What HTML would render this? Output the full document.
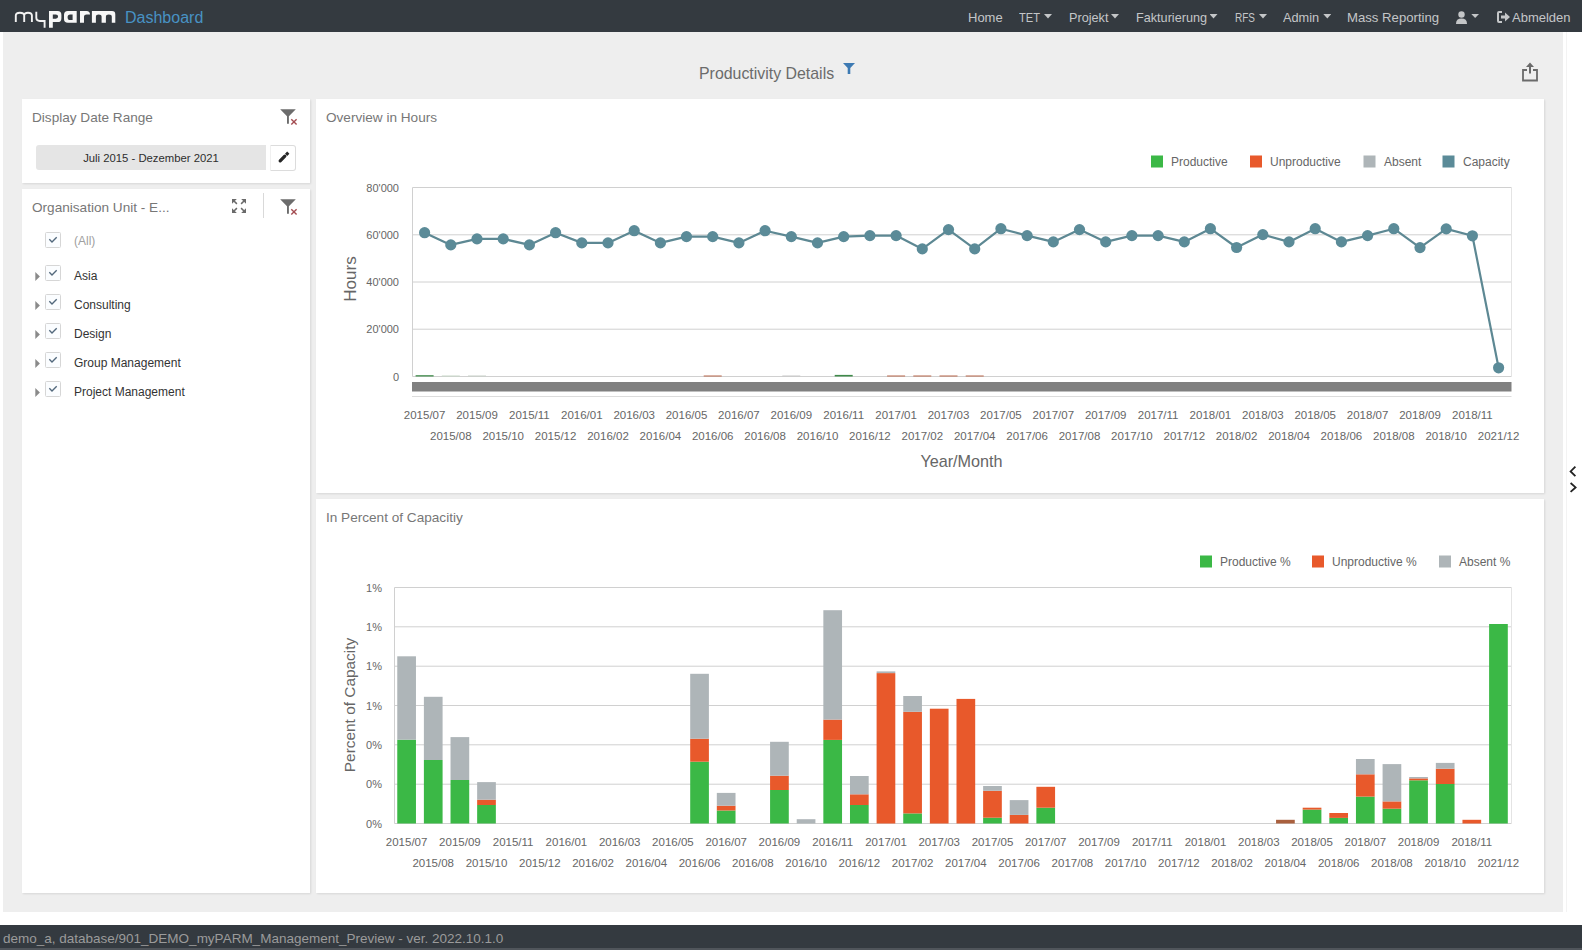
<!DOCTYPE html>
<html><head><meta charset="utf-8"><title>myPARM Dashboard</title>
<style>
html,body{margin:0;padding:0;}
body{width:1582px;height:950px;overflow:hidden;position:relative;background:#fff;font-family:"Liberation Sans", sans-serif;}
.abs{position:absolute;}
#nav{position:absolute;left:0;top:0;width:1582px;height:32px;background:#343a40;}
.nv{position:absolute;top:10px;font-size:13px;color:#c4c6c8;white-space:nowrap;line-height:16px;}
.caret{position:absolute;top:14px;width:8px;height:4.5px;background:#c4c6c8;clip-path:polygon(0 0,100% 0,50% 100%);}
#content{position:absolute;left:3px;top:32px;width:1560px;height:880px;background:#eeeeee;}
.card{position:absolute;background:#fff;box-shadow:1px 1px 2px rgba(0,0,0,0.10);}
.ttl{position:absolute;font-size:13.6px;color:#777;white-space:nowrap;line-height:16px;}
.cb{position:absolute;width:14px;height:14px;border:1px solid #dcdcdc;background:#fbfdff;}
.cb::after{content:"";position:absolute;left:4.5px;top:1.5px;width:3.5px;height:7px;border-right:1.6px solid #4f6c87;border-bottom:1.6px solid #4f6c87;transform:rotate(45deg);}
.tx{position:absolute;font-size:12px;color:#333;white-space:nowrap;line-height:14px;}
.arr{position:absolute;width:0;height:0;border-top:4px solid transparent;border-bottom:4px solid transparent;border-left:5px solid #8a8a8a;}
#footer{position:absolute;left:0;top:925px;width:1582px;height:25px;background:#343a40;}
svg text{font-family:"Liberation Sans", sans-serif;}
</style></head><body>
<div id="nav">
  <svg class="abs" style="left:0;top:0" width="125" height="32" viewBox="0 0 125 32">
    <path d="M15.8 22 V15.6 Q15.8 12.7 19.9 12.7 Q24.2 12.7 24.2 15.6 V22 M24.2 15.6 Q24.2 12.7 28 12.7 Q31.9 12.7 31.9 15.6 V22" fill="none" stroke="#f2f2f2" stroke-width="1.9"/>
    <path d="M36.3 11.8 V17.6 Q36.3 21 39.8 21 H44.6 V27.7" fill="none" stroke="#f2f2f2" stroke-width="1.9"/>
    <path fill="#f7f7f7" fill-rule="evenodd" d="M49 11.1 H57.6 Q61.4 11.1 61.4 14.9 V18.2 Q61.4 22.1 57.6 22.1 H52.8 V27.7 H49 Z M52.8 14.4 V18.7 H55.8 Q58.1 18.7 58.1 16.55 Q58.1 14.4 55.8 14.4 Z"/>
    <path fill="#f7f7f7" fill-rule="evenodd" d="M76.7 11 V22.8 H67.9 Q64 22.8 64 19 V14.8 Q64 11 67.9 11 Z M72.6 14.4 H70.2 Q67.6 14.4 67.6 17.25 Q67.6 20.1 70.2 20.1 H72.6 Z"/>
    <path fill="#f7f7f7" d="M80 22.8 V11 H86.5 Q90 11 90 14.6 H86.5 Q84 14.6 84 16.5 V22.8 Z"/>
    <path fill="#f7f7f7" d="M91.9 22.8 V11.1 H112 Q115.3 11.1 115.3 14.4 V22.8 H111.8 V16.8 Q111.8 14.4 108.85 14.4 Q105.9 14.4 105.9 16.8 V22.8 H101.6 V16.8 Q101.6 14.4 98.75 14.4 Q95.9 14.4 95.9 16.8 V22.8 Z"/>
  </svg>
  <div class="abs" style="left:125px;top:8px;font-size:16px;color:#4892c4;line-height:19px;">Dashboard</div>
  <div class="nv" style="left:968px">Home</div>
  <div class="nv" style="left:1019px;transform:scaleX(0.854);transform-origin:0 0">TET</div><div class="caret" style="left:1044px"></div>
  <div class="nv" style="left:1068.5px;transform:scaleX(0.975);transform-origin:0 0">Projekt</div><div class="caret" style="left:1111px"></div>
  <div class="nv" style="left:1135.5px;transform:scaleX(0.973);transform-origin:0 0">Fakturierung</div><div class="caret" style="left:1209.5px"></div>
  <div class="nv" style="left:1234.5px;transform:scaleX(0.77);transform-origin:0 0">RFS</div><div class="caret" style="left:1259px"></div>
  <div class="nv" style="left:1283px;transform:scaleX(0.981);transform-origin:0 0">Admin</div><div class="caret" style="left:1323.3px"></div>
  <div class="nv" style="left:1347.3px;transform:scaleX(1.012);transform-origin:0 0">Mass Reporting</div>
  <svg class="abs" style="left:1455px;top:10px" width="26" height="16" viewBox="0 0 26 16"><circle cx="6.5" cy="4.5" r="3.2" fill="#c4c6c8"/><path d="M1 14 Q1 8.6 6.5 8.6 Q12 8.6 12 14 Z" fill="#c4c6c8"/><path d="M16.3 4 L24 4 L20.15 8 Z" fill="#c4c6c8"/></svg>
  <svg class="abs" style="left:1497px;top:11px" width="14" height="12" viewBox="0 0 14 12"><path d="M5 1 H2 Q1 1 1 2 V10 Q1 11 2 11 H5" fill="none" stroke="#c4c6c8" stroke-width="2"/><path d="M4 4.5 H8 V1.5 L13 6 L8 10.5 V7.5 H4 Z" fill="#c4c6c8"/></svg>
  <div class="nv" style="left:1512px">Abmelden</div>
</div>
<div id="content"></div>
<div class="abs" style="left:1566px;top:32px;width:1px;height:880px;background:#f3f3f3"></div>
<div class="abs" style="left:699px;top:65px;font-size:15.9px;color:#6b6b6b;line-height:18px;white-space:nowrap">Productivity Details</div>
<svg class="abs" style="left:843px;top:63px" width="12" height="11" viewBox="0 0 12 11"><path d="M0 0 H12 L7.3 5 V11 H4.7 V5 Z" fill="#3d7ab3"/></svg>
<svg class="abs" style="left:1520px;top:61px" width="20" height="22" viewBox="0 0 20 22"><path d="M7 9 H3 V19.5 H17 V9 H13" fill="none" stroke="#6a6a6a" stroke-width="1.8"/><path d="M10 1.5 L14 6 H11 V12.5 H9 V6 H6 Z" fill="#6a6a6a"/></svg>

<div class="card" style="left:22px;top:99px;width:288px;height:84px"></div>
<div class="ttl" style="left:32px;top:110px">Display Date Range</div>
<div class="abs" style="left:280px;top:109px"><svg width="18" height="17" viewBox="0 0 18 17"><path d="M0.2 0.3 H15.8 L8.9 7.3 V14.7 H7 V7.3 Z" fill="#6c6c6c"/><path d="M11.3 10.2 L16.6 15.5 M16.6 10.2 L11.3 15.5" stroke="#a44d52" stroke-width="1.4"/></svg></div>
<div class="abs" style="left:36px;top:145px;width:230px;height:25px;background:#e5e5e5;border-radius:3px 0 0 3px;"></div>
<div class="abs" style="left:36px;top:151px;width:230px;text-align:center;font-size:11.3px;color:#2e2e2e;line-height:14px">Juli 2015 - Dezember 2021</div>
<div class="abs" style="left:270px;top:145px;width:23.5px;height:24px;border:1px solid #dcdcdc;border-left-color:#f0f0f0;border-radius:0 3px 3px 0;background:#fff"></div>
<svg class="abs" style="left:270px;top:145px" width="26" height="26" viewBox="0 0 26 26"><path d="M10.2 15.8 L14.8 11.2" stroke="#262626" stroke-width="3.3" stroke-linecap="round"/><path d="M17.2 6.6 L19.4 8.8 L17.2 11 L15 8.8 Z" fill="#262626"/></svg>

<div class="card" style="left:22px;top:189px;width:288px;height:704px"></div>
<div class="ttl" style="left:32px;top:200px">Organisation Unit - E...</div>
<svg class="abs" style="left:231px;top:198px" width="16" height="16" viewBox="0 0 16 16" fill="#6a6a6a">
<g stroke="none"><path d="M1 1 H5.8 L1 5.8 Z"/><path d="M15 1 H10.2 L15 5.8 Z"/><path d="M1 15 H5.8 L1 10.2 Z"/><path d="M15 15 H10.2 L15 10.2 Z"/></g>
<g stroke="#6a6a6a" stroke-width="1.5"><path d="M3 3 L5.9 5.9 M13 3 L10.1 5.9 M3 13 L5.9 10.1 M13 13 L10.1 10.1"/></g></svg>
<div class="abs" style="left:263px;top:193px;width:1px;height:25px;background:#d9d9d9"></div>
<div class="abs" style="left:280px;top:199px"><svg width="18" height="17" viewBox="0 0 18 17"><path d="M0.2 0.3 H15.8 L8.9 7.3 V14.7 H7 V7.3 Z" fill="#6c6c6c"/><path d="M11.3 10.2 L16.6 15.5 M16.6 10.2 L11.3 15.5" stroke="#a44d52" stroke-width="1.4"/></svg></div>
<svg class="abs" style="left:45px;top:232px" width="16" height="16" viewBox="0 0 16 16"><rect x="0.5" y="0.5" width="15" height="15" rx="1" fill="#fbfdff" stroke="#d6d6d6"/><path d="M4.3 7.3 L7 10 L11.7 5.2" fill="none" stroke="#52687c" stroke-width="1.35"/></svg><div class="tx" style="left:74px;top:234px;color:#a0a0a0">(All)</div>
<svg class="abs" style="left:35px;top:272px" width="6" height="9" viewBox="0 0 6 9"><path d="M0.3 0 L4.9 4.5 L0.3 9 Z" fill="#8a8a8a"/></svg><svg class="abs" style="left:45px;top:265px" width="16" height="16" viewBox="0 0 16 16"><rect x="0.5" y="0.5" width="15" height="15" rx="1" fill="#fbfdff" stroke="#d6d6d6"/><path d="M4.3 7.3 L7 10 L11.7 5.2" fill="none" stroke="#52687c" stroke-width="1.35"/></svg><div class="tx" style="left:74px;top:269px">Asia</div>
<svg class="abs" style="left:35px;top:301px" width="6" height="9" viewBox="0 0 6 9"><path d="M0.3 0 L4.9 4.5 L0.3 9 Z" fill="#8a8a8a"/></svg><svg class="abs" style="left:45px;top:294px" width="16" height="16" viewBox="0 0 16 16"><rect x="0.5" y="0.5" width="15" height="15" rx="1" fill="#fbfdff" stroke="#d6d6d6"/><path d="M4.3 7.3 L7 10 L11.7 5.2" fill="none" stroke="#52687c" stroke-width="1.35"/></svg><div class="tx" style="left:74px;top:298px">Consulting</div>
<svg class="abs" style="left:35px;top:330px" width="6" height="9" viewBox="0 0 6 9"><path d="M0.3 0 L4.9 4.5 L0.3 9 Z" fill="#8a8a8a"/></svg><svg class="abs" style="left:45px;top:323px" width="16" height="16" viewBox="0 0 16 16"><rect x="0.5" y="0.5" width="15" height="15" rx="1" fill="#fbfdff" stroke="#d6d6d6"/><path d="M4.3 7.3 L7 10 L11.7 5.2" fill="none" stroke="#52687c" stroke-width="1.35"/></svg><div class="tx" style="left:74px;top:327px">Design</div>
<svg class="abs" style="left:35px;top:359px" width="6" height="9" viewBox="0 0 6 9"><path d="M0.3 0 L4.9 4.5 L0.3 9 Z" fill="#8a8a8a"/></svg><svg class="abs" style="left:45px;top:352px" width="16" height="16" viewBox="0 0 16 16"><rect x="0.5" y="0.5" width="15" height="15" rx="1" fill="#fbfdff" stroke="#d6d6d6"/><path d="M4.3 7.3 L7 10 L11.7 5.2" fill="none" stroke="#52687c" stroke-width="1.35"/></svg><div class="tx" style="left:74px;top:356px">Group Management</div>
<svg class="abs" style="left:35px;top:388px" width="6" height="9" viewBox="0 0 6 9"><path d="M0.3 0 L4.9 4.5 L0.3 9 Z" fill="#8a8a8a"/></svg><svg class="abs" style="left:45px;top:381px" width="16" height="16" viewBox="0 0 16 16"><rect x="0.5" y="0.5" width="15" height="15" rx="1" fill="#fbfdff" stroke="#d6d6d6"/><path d="M4.3 7.3 L7 10 L11.7 5.2" fill="none" stroke="#52687c" stroke-width="1.35"/></svg><div class="tx" style="left:74px;top:385px">Project Management</div>

<div class="card" style="left:316px;top:99px;width:1228px;height:394px"></div>
<div class="ttl" style="left:326px;top:110px">Overview in Hours</div>
<div class="card" style="left:316px;top:499px;width:1228px;height:394px"></div>
<div class="ttl" style="left:326px;top:510px">In Percent of Capacitiy</div>

<svg class="abs" style="left:0;top:0" width="1582" height="950" viewBox="0 0 1582 950">
<line x1="412.5" y1="187.5" x2="1511.5" y2="187.5" stroke="#d0d0d0" stroke-width="1"/>
<line x1="412.5" y1="234.8" x2="1511.5" y2="234.8" stroke="#d0d0d0" stroke-width="1"/>
<line x1="412.5" y1="282.0" x2="1511.5" y2="282.0" stroke="#d0d0d0" stroke-width="1"/>
<line x1="412.5" y1="329.2" x2="1511.5" y2="329.2" stroke="#d0d0d0" stroke-width="1"/>
<line x1="412.5" y1="376.5" x2="1511.5" y2="376.5" stroke="#d0d0d0" stroke-width="1"/>
<line x1="412.5" y1="187.5" x2="412.5" y2="376.5" stroke="#d0d0d0" stroke-width="1"/>
<line x1="1511.5" y1="187.5" x2="1511.5" y2="376.5" stroke="#e4e4e4" stroke-width="1"/>
<text x="399" y="191.5" text-anchor="end" font-size="11" fill="#666">80'000</text>
<text x="399" y="238.8" text-anchor="end" font-size="11" fill="#666">60'000</text>
<text x="399" y="286.0" text-anchor="end" font-size="11" fill="#666">40'000</text>
<text x="399" y="333.2" text-anchor="end" font-size="11" fill="#666">20'000</text>
<text x="399" y="380.5" text-anchor="end" font-size="11" fill="#666">0</text>
<rect x="415.6" y="375.2" width="18" height="1.3" fill="#3f8a4a"/>
<rect x="441.8" y="375.5" width="18" height="1" fill="#c8d8c8"/>
<rect x="468.0" y="375.5" width="18" height="1" fill="#c8d0c8"/>
<rect x="703.7" y="375.5" width="18" height="1" fill="#b8664a"/>
<rect x="782.3" y="375.5" width="18" height="1" fill="#c8c8c8"/>
<rect x="834.7" y="374.9" width="18" height="1.6" fill="#3f8a4a"/>
<rect x="887.1" y="375.5" width="18" height="1" fill="#b8664a"/>
<rect x="913.3" y="375.5" width="18" height="1" fill="#b8664a"/>
<rect x="939.5" y="375.5" width="18" height="1" fill="#b8664a"/>
<rect x="965.7" y="375.5" width="18" height="1" fill="#b8664a"/>
<rect x="412" y="382" width="1099.5" height="9.5" fill="#808080"/>
<line x1="412" y1="396.5" x2="1511.5" y2="396.5" stroke="#dcdcdc" stroke-width="1"/>
<polyline points="424.6,232.7 450.8,244.9 477.0,238.9 503.2,238.9 529.4,244.9 555.6,232.7 581.8,242.9 608.0,242.9 634.2,230.7 660.4,242.9 686.5,236.6 712.7,236.6 738.9,242.9 765.1,230.7 791.3,236.6 817.5,242.9 843.7,236.6 869.9,235.6 896.1,235.6 922.3,248.9 948.5,229.6 974.7,248.9 1000.9,228.7 1027.1,235.6 1053.3,241.9 1079.5,229.6 1105.7,241.9 1131.9,235.6 1158.1,235.6 1184.3,241.9 1210.4,228.7 1236.6,247.5 1262.8,234.6 1289.0,241.9 1315.2,228.7 1341.4,241.9 1367.6,235.6 1393.8,228.7 1420.0,247.6 1446.2,228.9 1472.4,235.8 1498.6,367.8" fill="none" stroke="#5d8893" stroke-width="2.2" stroke-linejoin="round"/>
<circle cx="424.6" cy="232.7" r="5.6" fill="#5b8b98"/>
<circle cx="450.8" cy="244.9" r="5.6" fill="#5b8b98"/>
<circle cx="477.0" cy="238.9" r="5.6" fill="#5b8b98"/>
<circle cx="503.2" cy="238.9" r="5.6" fill="#5b8b98"/>
<circle cx="529.4" cy="244.9" r="5.6" fill="#5b8b98"/>
<circle cx="555.6" cy="232.7" r="5.6" fill="#5b8b98"/>
<circle cx="581.8" cy="242.9" r="5.6" fill="#5b8b98"/>
<circle cx="608.0" cy="242.9" r="5.6" fill="#5b8b98"/>
<circle cx="634.2" cy="230.7" r="5.6" fill="#5b8b98"/>
<circle cx="660.4" cy="242.9" r="5.6" fill="#5b8b98"/>
<circle cx="686.5" cy="236.6" r="5.6" fill="#5b8b98"/>
<circle cx="712.7" cy="236.6" r="5.6" fill="#5b8b98"/>
<circle cx="738.9" cy="242.9" r="5.6" fill="#5b8b98"/>
<circle cx="765.1" cy="230.7" r="5.6" fill="#5b8b98"/>
<circle cx="791.3" cy="236.6" r="5.6" fill="#5b8b98"/>
<circle cx="817.5" cy="242.9" r="5.6" fill="#5b8b98"/>
<circle cx="843.7" cy="236.6" r="5.6" fill="#5b8b98"/>
<circle cx="869.9" cy="235.6" r="5.6" fill="#5b8b98"/>
<circle cx="896.1" cy="235.6" r="5.6" fill="#5b8b98"/>
<circle cx="922.3" cy="248.9" r="5.6" fill="#5b8b98"/>
<circle cx="948.5" cy="229.6" r="5.6" fill="#5b8b98"/>
<circle cx="974.7" cy="248.9" r="5.6" fill="#5b8b98"/>
<circle cx="1000.9" cy="228.7" r="5.6" fill="#5b8b98"/>
<circle cx="1027.1" cy="235.6" r="5.6" fill="#5b8b98"/>
<circle cx="1053.3" cy="241.9" r="5.6" fill="#5b8b98"/>
<circle cx="1079.5" cy="229.6" r="5.6" fill="#5b8b98"/>
<circle cx="1105.7" cy="241.9" r="5.6" fill="#5b8b98"/>
<circle cx="1131.9" cy="235.6" r="5.6" fill="#5b8b98"/>
<circle cx="1158.1" cy="235.6" r="5.6" fill="#5b8b98"/>
<circle cx="1184.3" cy="241.9" r="5.6" fill="#5b8b98"/>
<circle cx="1210.4" cy="228.7" r="5.6" fill="#5b8b98"/>
<circle cx="1236.6" cy="247.5" r="5.6" fill="#5b8b98"/>
<circle cx="1262.8" cy="234.6" r="5.6" fill="#5b8b98"/>
<circle cx="1289.0" cy="241.9" r="5.6" fill="#5b8b98"/>
<circle cx="1315.2" cy="228.7" r="5.6" fill="#5b8b98"/>
<circle cx="1341.4" cy="241.9" r="5.6" fill="#5b8b98"/>
<circle cx="1367.6" cy="235.6" r="5.6" fill="#5b8b98"/>
<circle cx="1393.8" cy="228.7" r="5.6" fill="#5b8b98"/>
<circle cx="1420.0" cy="247.6" r="5.6" fill="#5b8b98"/>
<circle cx="1446.2" cy="228.9" r="5.6" fill="#5b8b98"/>
<circle cx="1472.4" cy="235.8" r="5.6" fill="#5b8b98"/>
<circle cx="1498.6" cy="367.8" r="5.6" fill="#5b8b98"/>
<text x="424.6" y="419" text-anchor="middle" font-size="11.5" fill="#666">2015/07</text>
<text x="450.8" y="440.2" text-anchor="middle" font-size="11.5" fill="#666">2015/08</text>
<text x="477.0" y="419" text-anchor="middle" font-size="11.5" fill="#666">2015/09</text>
<text x="503.2" y="440.2" text-anchor="middle" font-size="11.5" fill="#666">2015/10</text>
<text x="529.4" y="419" text-anchor="middle" font-size="11.5" fill="#666">2015/11</text>
<text x="555.6" y="440.2" text-anchor="middle" font-size="11.5" fill="#666">2015/12</text>
<text x="581.8" y="419" text-anchor="middle" font-size="11.5" fill="#666">2016/01</text>
<text x="608.0" y="440.2" text-anchor="middle" font-size="11.5" fill="#666">2016/02</text>
<text x="634.2" y="419" text-anchor="middle" font-size="11.5" fill="#666">2016/03</text>
<text x="660.4" y="440.2" text-anchor="middle" font-size="11.5" fill="#666">2016/04</text>
<text x="686.5" y="419" text-anchor="middle" font-size="11.5" fill="#666">2016/05</text>
<text x="712.7" y="440.2" text-anchor="middle" font-size="11.5" fill="#666">2016/06</text>
<text x="738.9" y="419" text-anchor="middle" font-size="11.5" fill="#666">2016/07</text>
<text x="765.1" y="440.2" text-anchor="middle" font-size="11.5" fill="#666">2016/08</text>
<text x="791.3" y="419" text-anchor="middle" font-size="11.5" fill="#666">2016/09</text>
<text x="817.5" y="440.2" text-anchor="middle" font-size="11.5" fill="#666">2016/10</text>
<text x="843.7" y="419" text-anchor="middle" font-size="11.5" fill="#666">2016/11</text>
<text x="869.9" y="440.2" text-anchor="middle" font-size="11.5" fill="#666">2016/12</text>
<text x="896.1" y="419" text-anchor="middle" font-size="11.5" fill="#666">2017/01</text>
<text x="922.3" y="440.2" text-anchor="middle" font-size="11.5" fill="#666">2017/02</text>
<text x="948.5" y="419" text-anchor="middle" font-size="11.5" fill="#666">2017/03</text>
<text x="974.7" y="440.2" text-anchor="middle" font-size="11.5" fill="#666">2017/04</text>
<text x="1000.9" y="419" text-anchor="middle" font-size="11.5" fill="#666">2017/05</text>
<text x="1027.1" y="440.2" text-anchor="middle" font-size="11.5" fill="#666">2017/06</text>
<text x="1053.3" y="419" text-anchor="middle" font-size="11.5" fill="#666">2017/07</text>
<text x="1079.5" y="440.2" text-anchor="middle" font-size="11.5" fill="#666">2017/08</text>
<text x="1105.7" y="419" text-anchor="middle" font-size="11.5" fill="#666">2017/09</text>
<text x="1131.9" y="440.2" text-anchor="middle" font-size="11.5" fill="#666">2017/10</text>
<text x="1158.1" y="419" text-anchor="middle" font-size="11.5" fill="#666">2017/11</text>
<text x="1184.3" y="440.2" text-anchor="middle" font-size="11.5" fill="#666">2017/12</text>
<text x="1210.4" y="419" text-anchor="middle" font-size="11.5" fill="#666">2018/01</text>
<text x="1236.6" y="440.2" text-anchor="middle" font-size="11.5" fill="#666">2018/02</text>
<text x="1262.8" y="419" text-anchor="middle" font-size="11.5" fill="#666">2018/03</text>
<text x="1289.0" y="440.2" text-anchor="middle" font-size="11.5" fill="#666">2018/04</text>
<text x="1315.2" y="419" text-anchor="middle" font-size="11.5" fill="#666">2018/05</text>
<text x="1341.4" y="440.2" text-anchor="middle" font-size="11.5" fill="#666">2018/06</text>
<text x="1367.6" y="419" text-anchor="middle" font-size="11.5" fill="#666">2018/07</text>
<text x="1393.8" y="440.2" text-anchor="middle" font-size="11.5" fill="#666">2018/08</text>
<text x="1420.0" y="419" text-anchor="middle" font-size="11.5" fill="#666">2018/09</text>
<text x="1446.2" y="440.2" text-anchor="middle" font-size="11.5" fill="#666">2018/10</text>
<text x="1472.4" y="419" text-anchor="middle" font-size="11.5" fill="#666">2018/11</text>
<text x="1498.6" y="440.2" text-anchor="middle" font-size="11.5" fill="#666">2021/12</text>
<text x="961.5" y="467" text-anchor="middle" font-size="16.2" fill="#666">Year/Month</text>
<text transform="translate(355.8,279) rotate(-90)" text-anchor="middle" font-size="17" fill="#666">Hours</text>
<rect x="1151" y="155.5" width="12" height="12" fill="#3bb846"/>
<text x="1171" y="166" font-size="12" fill="#666">Productive</text>
<rect x="1250" y="155.5" width="12" height="12" fill="#e8592b"/>
<text x="1270" y="166" font-size="12" fill="#666">Unproductive</text>
<rect x="1363.5" y="155.5" width="12" height="12" fill="#aeb5b8"/>
<text x="1384" y="166" font-size="12" fill="#666">Absent</text>
<rect x="1442.5" y="155.5" width="12" height="12" fill="#5b8b98"/>
<text x="1463" y="166" font-size="12" fill="#666">Capacity</text>
<line x1="394.5" y1="587.5" x2="1511.5" y2="587.5" stroke="#d0d0d0" stroke-width="1"/>
<line x1="394.5" y1="626.8" x2="1511.5" y2="626.8" stroke="#d0d0d0" stroke-width="1"/>
<line x1="394.5" y1="666.2" x2="1511.5" y2="666.2" stroke="#d0d0d0" stroke-width="1"/>
<line x1="394.5" y1="705.5" x2="1511.5" y2="705.5" stroke="#d0d0d0" stroke-width="1"/>
<line x1="394.5" y1="744.8" x2="1511.5" y2="744.8" stroke="#d0d0d0" stroke-width="1"/>
<line x1="394.5" y1="784.2" x2="1511.5" y2="784.2" stroke="#d0d0d0" stroke-width="1"/>
<line x1="394.5" y1="823.5" x2="1511.5" y2="823.5" stroke="#d0d0d0" stroke-width="1"/>
<line x1="394.5" y1="587.5" x2="394.5" y2="823.5" stroke="#d0d0d0" stroke-width="1"/>
<line x1="1511.5" y1="587.5" x2="1511.5" y2="823.5" stroke="#e4e4e4" stroke-width="1"/>
<text x="382" y="591.5" text-anchor="end" font-size="11" fill="#666">1%</text>
<text x="382" y="630.8" text-anchor="end" font-size="11" fill="#666">1%</text>
<text x="382" y="670.2" text-anchor="end" font-size="11" fill="#666">1%</text>
<text x="382" y="709.5" text-anchor="end" font-size="11" fill="#666">1%</text>
<text x="382" y="748.8" text-anchor="end" font-size="11" fill="#666">0%</text>
<text x="382" y="788.2" text-anchor="end" font-size="11" fill="#666">0%</text>
<text x="382" y="827.5" text-anchor="end" font-size="11" fill="#666">0%</text>
<rect x="397.26" y="739.7" width="18.7" height="83.80" fill="#3bb846"/>
<rect x="397.26" y="656.3" width="18.7" height="83.40" fill="#aeb5b8"/>
<rect x="423.89" y="760" width="18.7" height="63.50" fill="#3bb846"/>
<rect x="423.89" y="696.8" width="18.7" height="63.20" fill="#aeb5b8"/>
<rect x="450.52" y="780" width="18.7" height="43.50" fill="#3bb846"/>
<rect x="450.52" y="737.1" width="18.7" height="42.90" fill="#aeb5b8"/>
<rect x="477.15" y="805" width="18.7" height="18.50" fill="#3bb846"/>
<rect x="477.15" y="799.7" width="18.7" height="5.30" fill="#e8592b"/>
<rect x="477.15" y="782.1" width="18.7" height="17.60" fill="#aeb5b8"/>
<rect x="690.20" y="761.7" width="18.7" height="61.80" fill="#3bb846"/>
<rect x="690.20" y="738.7" width="18.7" height="23.00" fill="#e8592b"/>
<rect x="690.20" y="673.8" width="18.7" height="64.90" fill="#aeb5b8"/>
<rect x="716.82" y="810.5" width="18.7" height="13.00" fill="#3bb846"/>
<rect x="716.82" y="805.7" width="18.7" height="4.80" fill="#e8592b"/>
<rect x="716.82" y="792.9" width="18.7" height="12.80" fill="#aeb5b8"/>
<rect x="770.08" y="790" width="18.7" height="33.50" fill="#3bb846"/>
<rect x="770.08" y="775.7" width="18.7" height="14.30" fill="#e8592b"/>
<rect x="770.08" y="741.8" width="18.7" height="33.90" fill="#aeb5b8"/>
<rect x="796.72" y="819.2" width="18.7" height="4.30" fill="#aeb5b8"/>
<rect x="823.34" y="739.9" width="18.7" height="83.60" fill="#3bb846"/>
<rect x="823.34" y="719.6" width="18.7" height="20.30" fill="#e8592b"/>
<rect x="823.34" y="610.2" width="18.7" height="109.40" fill="#aeb5b8"/>
<rect x="849.98" y="805" width="18.7" height="18.50" fill="#3bb846"/>
<rect x="849.98" y="794.3" width="18.7" height="10.70" fill="#e8592b"/>
<rect x="849.98" y="776" width="18.7" height="18.30" fill="#aeb5b8"/>
<rect x="876.60" y="673.1" width="18.7" height="150.40" fill="#e8592b"/>
<rect x="876.60" y="671.4" width="18.7" height="1.70" fill="#aeb5b8"/>
<rect x="903.24" y="813.4" width="18.7" height="10.10" fill="#3bb846"/>
<rect x="903.24" y="711.8" width="18.7" height="101.60" fill="#e8592b"/>
<rect x="903.24" y="696" width="18.7" height="15.80" fill="#aeb5b8"/>
<rect x="929.86" y="708.7" width="18.7" height="114.80" fill="#e8592b"/>
<rect x="956.50" y="698.9" width="18.7" height="124.60" fill="#e8592b"/>
<rect x="983.12" y="817.7" width="18.7" height="5.80" fill="#3bb846"/>
<rect x="983.12" y="790.8" width="18.7" height="26.90" fill="#e8592b"/>
<rect x="983.12" y="786" width="18.7" height="4.80" fill="#aeb5b8"/>
<rect x="1009.75" y="814.9" width="18.7" height="8.60" fill="#e8592b"/>
<rect x="1009.75" y="800.1" width="18.7" height="14.80" fill="#aeb5b8"/>
<rect x="1036.38" y="807.7" width="18.7" height="15.80" fill="#3bb846"/>
<rect x="1036.38" y="786.8" width="18.7" height="20.90" fill="#e8592b"/>
<rect x="1276.06" y="819.8" width="18.7" height="3.70" fill="#a9603e"/>
<rect x="1302.69" y="809.6" width="18.7" height="13.90" fill="#3bb846"/>
<rect x="1302.69" y="807.7" width="18.7" height="1.90" fill="#e8592b"/>
<rect x="1329.32" y="817.9" width="18.7" height="5.60" fill="#3bb846"/>
<rect x="1329.32" y="813" width="18.7" height="4.90" fill="#e8592b"/>
<rect x="1355.95" y="796.6" width="18.7" height="26.90" fill="#3bb846"/>
<rect x="1355.95" y="774.3" width="18.7" height="22.30" fill="#e8592b"/>
<rect x="1355.95" y="759" width="18.7" height="15.30" fill="#aeb5b8"/>
<rect x="1382.58" y="808.7" width="18.7" height="14.80" fill="#3bb846"/>
<rect x="1382.58" y="801.4" width="18.7" height="7.30" fill="#e8592b"/>
<rect x="1382.58" y="764.1" width="18.7" height="37.30" fill="#aeb5b8"/>
<rect x="1409.20" y="780.3" width="18.7" height="43.20" fill="#3bb846"/>
<rect x="1409.20" y="778.4" width="18.7" height="1.90" fill="#e8592b"/>
<rect x="1409.20" y="777" width="18.7" height="1.40" fill="#aeb5b8"/>
<rect x="1435.84" y="784" width="18.7" height="39.50" fill="#3bb846"/>
<rect x="1435.84" y="768.7" width="18.7" height="15.30" fill="#e8592b"/>
<rect x="1435.84" y="762.9" width="18.7" height="5.80" fill="#aeb5b8"/>
<rect x="1462.46" y="819.8" width="18.7" height="3.70" fill="#e8592b"/>
<rect x="1489.10" y="624" width="18.7" height="199.50" fill="#3bb846"/>
<text x="406.6" y="846" text-anchor="middle" font-size="11.5" fill="#666">2015/07</text>
<text x="433.2" y="867.2" text-anchor="middle" font-size="11.5" fill="#666">2015/08</text>
<text x="459.9" y="846" text-anchor="middle" font-size="11.5" fill="#666">2015/09</text>
<text x="486.5" y="867.2" text-anchor="middle" font-size="11.5" fill="#666">2015/10</text>
<text x="513.1" y="846" text-anchor="middle" font-size="11.5" fill="#666">2015/11</text>
<text x="539.8" y="867.2" text-anchor="middle" font-size="11.5" fill="#666">2015/12</text>
<text x="566.4" y="846" text-anchor="middle" font-size="11.5" fill="#666">2016/01</text>
<text x="593.0" y="867.2" text-anchor="middle" font-size="11.5" fill="#666">2016/02</text>
<text x="619.7" y="846" text-anchor="middle" font-size="11.5" fill="#666">2016/03</text>
<text x="646.3" y="867.2" text-anchor="middle" font-size="11.5" fill="#666">2016/04</text>
<text x="672.9" y="846" text-anchor="middle" font-size="11.5" fill="#666">2016/05</text>
<text x="699.5" y="867.2" text-anchor="middle" font-size="11.5" fill="#666">2016/06</text>
<text x="726.2" y="846" text-anchor="middle" font-size="11.5" fill="#666">2016/07</text>
<text x="752.8" y="867.2" text-anchor="middle" font-size="11.5" fill="#666">2016/08</text>
<text x="779.4" y="846" text-anchor="middle" font-size="11.5" fill="#666">2016/09</text>
<text x="806.1" y="867.2" text-anchor="middle" font-size="11.5" fill="#666">2016/10</text>
<text x="832.7" y="846" text-anchor="middle" font-size="11.5" fill="#666">2016/11</text>
<text x="859.3" y="867.2" text-anchor="middle" font-size="11.5" fill="#666">2016/12</text>
<text x="886.0" y="846" text-anchor="middle" font-size="11.5" fill="#666">2017/01</text>
<text x="912.6" y="867.2" text-anchor="middle" font-size="11.5" fill="#666">2017/02</text>
<text x="939.2" y="846" text-anchor="middle" font-size="11.5" fill="#666">2017/03</text>
<text x="965.8" y="867.2" text-anchor="middle" font-size="11.5" fill="#666">2017/04</text>
<text x="992.5" y="846" text-anchor="middle" font-size="11.5" fill="#666">2017/05</text>
<text x="1019.1" y="867.2" text-anchor="middle" font-size="11.5" fill="#666">2017/06</text>
<text x="1045.7" y="846" text-anchor="middle" font-size="11.5" fill="#666">2017/07</text>
<text x="1072.4" y="867.2" text-anchor="middle" font-size="11.5" fill="#666">2017/08</text>
<text x="1099.0" y="846" text-anchor="middle" font-size="11.5" fill="#666">2017/09</text>
<text x="1125.6" y="867.2" text-anchor="middle" font-size="11.5" fill="#666">2017/10</text>
<text x="1152.3" y="846" text-anchor="middle" font-size="11.5" fill="#666">2017/11</text>
<text x="1178.9" y="867.2" text-anchor="middle" font-size="11.5" fill="#666">2017/12</text>
<text x="1205.5" y="846" text-anchor="middle" font-size="11.5" fill="#666">2018/01</text>
<text x="1232.1" y="867.2" text-anchor="middle" font-size="11.5" fill="#666">2018/02</text>
<text x="1258.8" y="846" text-anchor="middle" font-size="11.5" fill="#666">2018/03</text>
<text x="1285.4" y="867.2" text-anchor="middle" font-size="11.5" fill="#666">2018/04</text>
<text x="1312.0" y="846" text-anchor="middle" font-size="11.5" fill="#666">2018/05</text>
<text x="1338.7" y="867.2" text-anchor="middle" font-size="11.5" fill="#666">2018/06</text>
<text x="1365.3" y="846" text-anchor="middle" font-size="11.5" fill="#666">2018/07</text>
<text x="1391.9" y="867.2" text-anchor="middle" font-size="11.5" fill="#666">2018/08</text>
<text x="1418.6" y="846" text-anchor="middle" font-size="11.5" fill="#666">2018/09</text>
<text x="1445.2" y="867.2" text-anchor="middle" font-size="11.5" fill="#666">2018/10</text>
<text x="1471.8" y="846" text-anchor="middle" font-size="11.5" fill="#666">2018/11</text>
<text x="1498.4" y="867.2" text-anchor="middle" font-size="11.5" fill="#666">2021/12</text>
<text transform="translate(355,705) rotate(-90)" text-anchor="middle" font-size="15.4" fill="#666">Percent of Capacity</text>
<rect x="1200" y="555.5" width="12" height="12" fill="#3bb846"/>
<text x="1220" y="566" font-size="12" fill="#666">Productive %</text>
<rect x="1312" y="555.5" width="12" height="12" fill="#e8592b"/>
<text x="1332" y="566" font-size="12" fill="#666">Unproductive %</text>
<rect x="1439" y="555.5" width="12" height="12" fill="#aeb5b8"/>
<text x="1459" y="566" font-size="12" fill="#666">Absent %</text>
</svg>

<svg class="abs" style="left:1566px;top:463px" width="14" height="32" viewBox="0 0 14 32"><path d="M9.4 3.6 L4.6 8.4 L9.4 13.1" fill="none" stroke="#222" stroke-width="1.8"/><path d="M4.6 20 L9.6 24.4 L4.6 28.9" fill="none" stroke="#222" stroke-width="1.8"/></svg>

<div id="footer"><div class="abs" style="left:3px;top:6px;font-size:13.5px;color:#9b9b9b;white-space:nowrap;line-height:16px">demo_a, database/901_DEMO_myPARM_Management_Preview - ver. 2022.10.1.0</div>
<div class="abs" style="left:0;top:23px;width:1582px;height:2px;background:#50555b"></div></div>
</body></html>
